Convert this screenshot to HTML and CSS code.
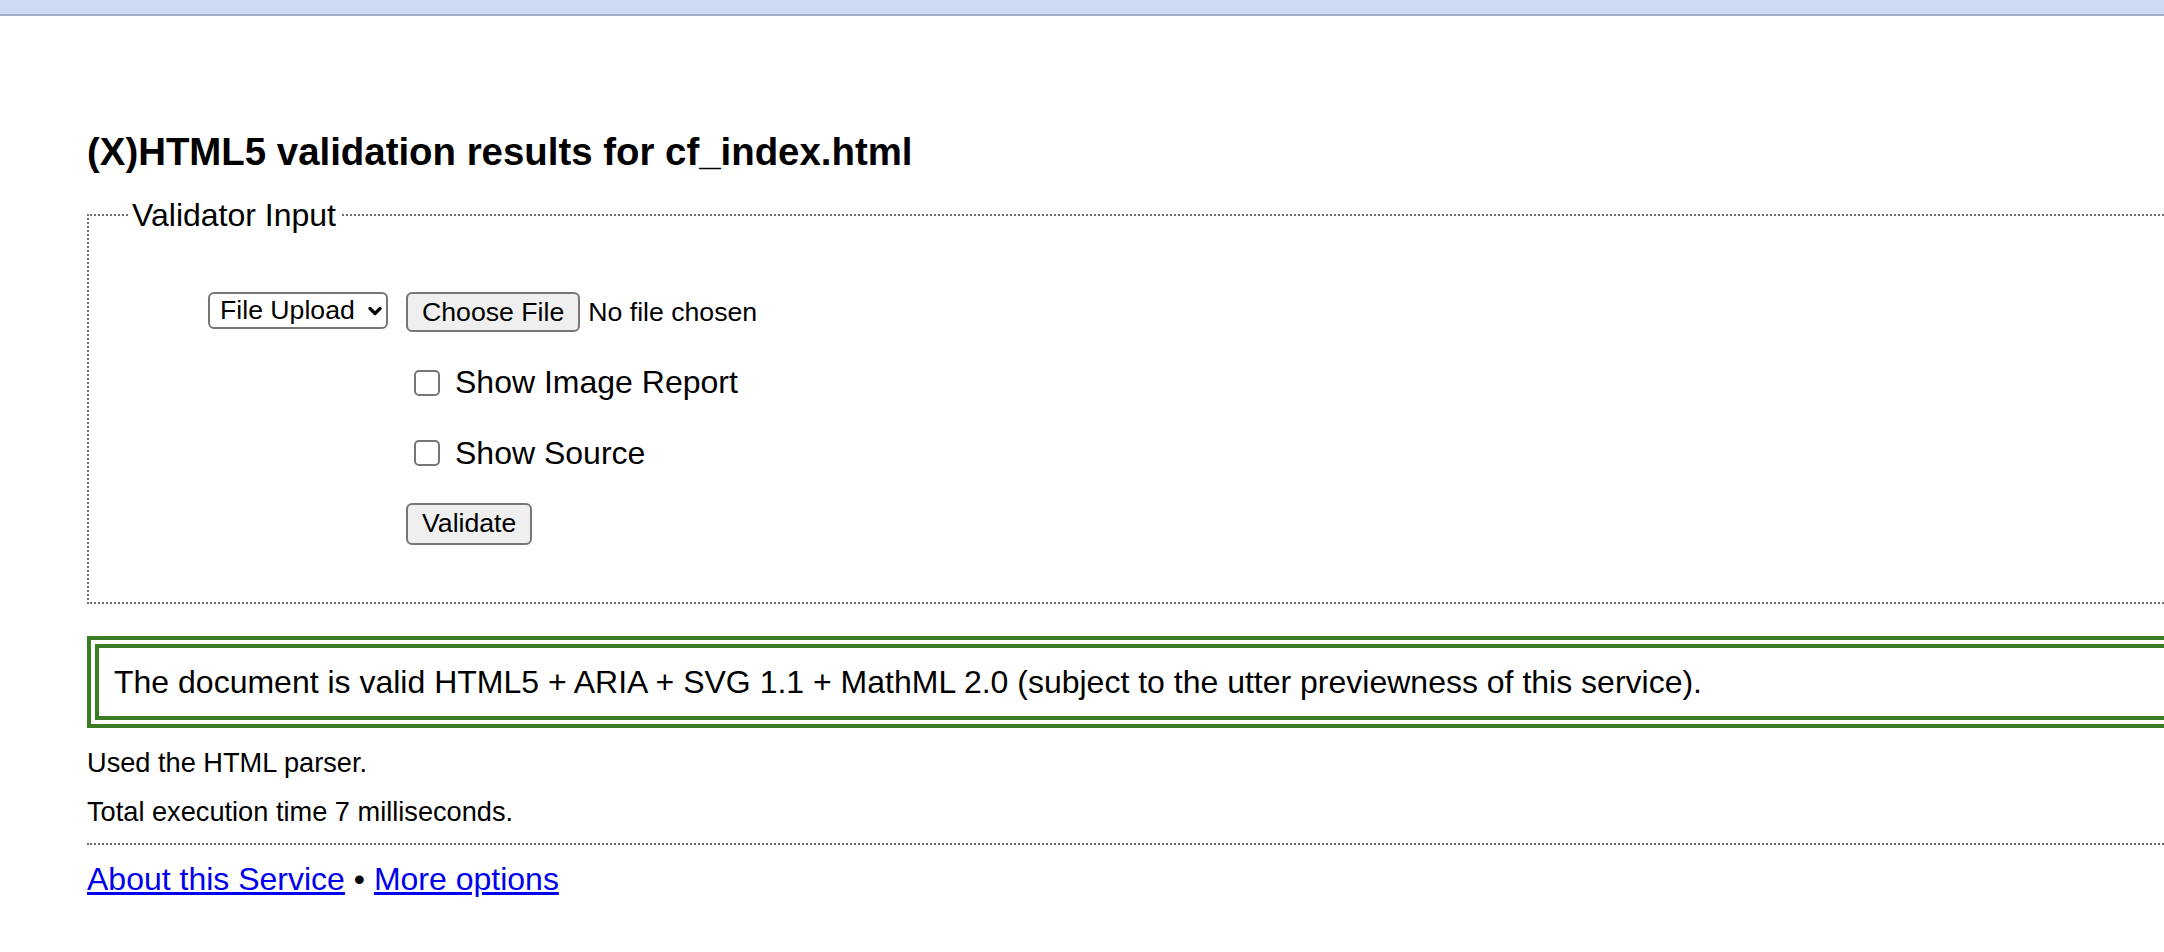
FILE: index.html
```html
<!DOCTYPE html>
<html lang="en">
<head>
<meta charset="utf-8">
<title>Validation results for cf_index.html</title>
<link rel="stylesheet" href="styles.css">
</head>
<body>
<div class="topbar"></div>
<div class="page">
  <h2 class="title">(X)HTML5 validation results for cf_index.html</h2>
  <fieldset class="input">
    <legend>Validator Input</legend>
    <div class="form">
      <div class="label-cell">
        <span class="select">File Upload<svg class="chev" width="14" height="10" viewBox="0 0 14 10"><path d="M2 2.5 L7 7.5 L12 2.5" fill="none" stroke="#000" stroke-width="3.2" stroke-linecap="round" stroke-linejoin="round"/></svg></span>
      </div>
      <div class="cell">
        <button class="btn" type="button">Choose File</button><span class="nofile">No file chosen</span>
      </div>
      <div></div>
      <div class="cell"><span class="check"></span><span class="opt">Show Image Report</span></div>
      <div></div>
      <div class="cell"><span class="check"></span><span class="opt">Show Source</span></div>
      <div></div>
      <div class="cell"><button class="btn btn-validate" type="button">Validate</button></div>
    </div>
  </fieldset>
  <div class="result">
    <p>The document is valid HTML5 + ARIA + SVG 1.1 + MathML 2.0 (subject to the utter previewness of this service).</p>
  </div>
  <p class="info">Used the HTML parser.</p>
  <p class="info">Total execution time 7 milliseconds.</p>
  <hr class="sep">
  <p class="links"><a href="#">About this Service</a> • <a href="#">More options</a></p>
</div>
</body>
</html>
```

FILE: styles.css
```css
html, body {
  margin: 0;
  padding: 0;
  overflow: hidden;
  background: #fff;
}
body {
  font-family: "Liberation Sans", Arial, Helvetica, sans-serif;
  font-size: 32px;
  color: #000;
}
.topbar {
  height: 14px;
  background: #cddcf3;
  border-bottom: 2px solid #a1b0c6;
}
.page {
  width: 2400px;
  padding-left: 87px;
  box-sizing: border-box;
}
.title {
  margin: 114px 0 0 0;
  font-size: 38.4px;
  line-height: 44px;
  font-weight: bold;
}
.input {
  margin: 22.5px 0 0 0;
  padding: 58px 0 58px 0;
  border: 2px dotted #6f6f6f;
  min-width: 0;
}
.input legend {
  margin-left: 39px;
  padding: 0 4px;
  font-size: 32px;
  line-height: 37px;
}
.form {
  display: grid;
  grid-template-columns: 299px 1fr;
  grid-auto-rows: 41px;
  column-gap: 18px;
  row-gap: 29.5px;
}
.label-cell {
  display: flex;
  justify-content: flex-end;
  align-items: center;
}
.cell {
  display: flex;
  align-items: center;
}
.select {
  box-sizing: border-box;
  width: 180px;
  height: 37px;
  display: inline-flex;
  align-items: center;
  justify-content: space-between;
  padding: 0 4px 0 10px;
  border: 2px solid #767676;
  border-radius: 6px;
  background: #fff;
  font-size: 26.67px;
  margin-bottom: 3px;
}
.chev {
  display: block;
}
.btn {
  box-sizing: border-box;
  height: 40px;
  padding: 0 14px;
  border: 2px solid #767676;
  border-radius: 6px;
  background: #efefef;
  color: #000;
  font-family: "Liberation Sans", Arial, Helvetica, sans-serif;
  font-size: 26.67px;
  line-height: 1;
}
.btn-validate {
  height: 42px;
  padding: 0 14px;
}
.nofile {
  margin-left: 8px;
  font-size: 26.67px;
}
.check {
  box-sizing: border-box;
  width: 26px;
  height: 26px;
  margin-left: 8px;
  margin-right: 15px;
  border: 2px solid #767676;
  border-radius: 5px;
  background: #fff;
}
.opt {
  font-size: 32px;
}
.result {
  margin-top: 32px;
  border: 12px double #3b7d23;
  padding: 15.5px 15px;
}
.result p {
  margin: 0;
  line-height: 37px;
  font-size: 32px;
}
.info {
  margin: 19px 0 0 0;
  font-size: 27.2px;
  line-height: 31px;
}
.info + .info {
  margin-top: 18px;
}
.sep {
  margin: 16px 0 0 0;
  border: 0;
  border-top: 2px dotted #666;
  height: 0;
}
.links {
  margin: 16px 0 0 0;
  line-height: 37px;
  font-size: 32px;
}
.links a {
  color: #0000ee;
  text-decoration: underline;
}
```
